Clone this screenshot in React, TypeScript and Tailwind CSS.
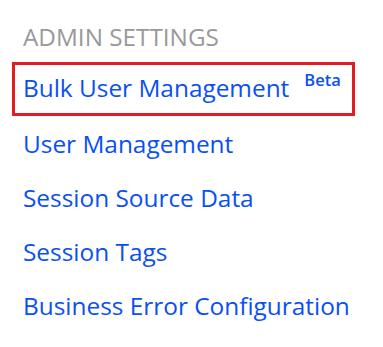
const items = [
  "User Management",
  "Session Source Data",
  "Session Tags",
  "Business Error Configuration",
];

export default function App() {
  return (
    <div className="w-[383px] h-[347px] bg-white pt-[21px] pl-[12px] font-['Open_Sans',sans-serif]">
      <h2 className="pl-[11px] text-[24.3px] leading-[32px] text-[#999999]">
        ADMIN SETTINGS
      </h2>
      <nav className="mt-[9px] flex flex-col">
        <a className="w-[343px] h-[54px] border-[3px] border-[#e31b23] pl-[8px] pt-[7px] flex items-start text-[24.4px] leading-[32px] text-[#0a4ff5]">
          <span>Bulk User Management</span>
          <span className="ml-[15px] -mt-[2px] text-[16.5px] font-semibold leading-[20px]">Beta</span>
        </a>
        <div className="mt-[12px] flex flex-col gap-[22px] pl-[11px]">
          {items.map((item) => (
            <a key={item} className="text-[24.4px] leading-[32px] text-[#0a4ff5]">
              {item}
            </a>
          ))}
        </div>
      </nav>
    </div>
  );
}
